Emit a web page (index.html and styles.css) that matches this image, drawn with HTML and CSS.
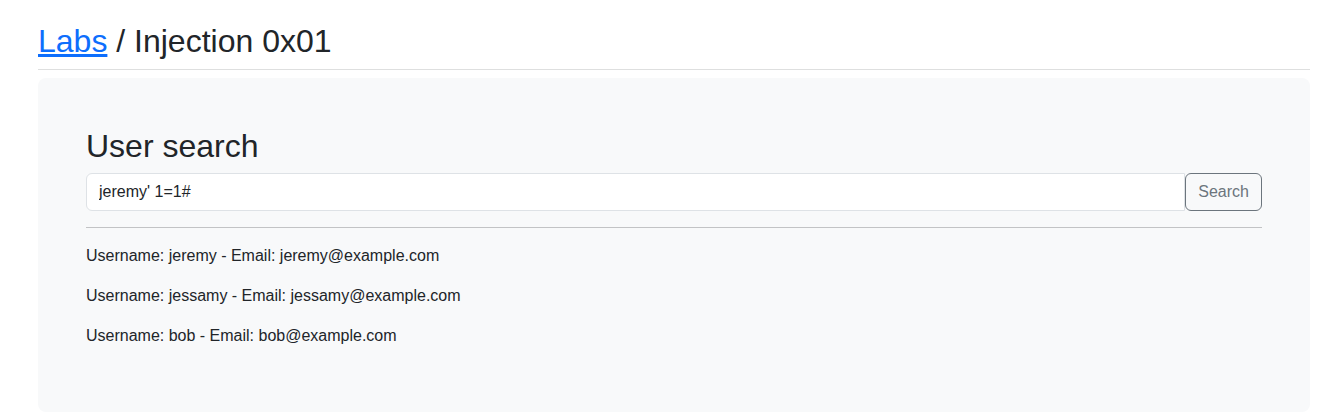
FILE: index.html
```html
<!DOCTYPE html>
<html lang="en">
<head>
<meta charset="utf-8">
<title>Injection 0x01</title>
<link rel="stylesheet" href="styles.css">
</head>
<body>
<div class="page">
  <h2 class="title"><a href="#">Labs</a> / Injection 0x01</h2>
  <hr class="rule-top">
  <div class="card">
    <h2 class="card-title">User search</h2>
    <form class="search">
      <input class="search-input" type="text" value="jeremy' 1=1#">
      <button class="search-btn" type="button">Search</button>
    </form>
    <hr class="rule">
    <p>Username: jeremy - Email: jeremy@example.com</p>
    <p>Username: jessamy - Email: jessamy@example.com</p>
    <p>Username: bob - Email: bob@example.com</p>
  </div>
</div>
</body>
</html>
```
FILE: styles.css
```css
* { box-sizing: border-box; }
html, body { margin: 0; padding: 0; background: #fff; }
body {
  font-family: "Liberation Sans", Arial, sans-serif;
  font-size: 16px;
  line-height: 1.5;
  color: #212529;
}
.page {
  padding: 22px 22px 0 38px;
}
.title {
  margin: 0;
  font-size: 32px;
  font-weight: 400;
  line-height: 1.2;
}
.title a { color: #0d6efd; text-decoration: underline; }
hr {
  border: 0;
  border-top: 1px solid #212529;
  opacity: .25;
  height: 0;
}
.rule-top { margin: 9px 0 8px; opacity: .15; }
.card {
  background: #f8f9fa;
  border-radius: 8px;
  padding: 49px 48px 48px;
}
.card-title {
  margin: 0 0 7px;
  font-size: 32px;
  font-weight: 400;
  line-height: 1.2;
}
.search { display: flex; margin: 0; }
.search-input {
  flex: 1;
  height: 38px;
  padding: 6px 12px;
  font: inherit;
  font-size: 16px;
  color: #212529;
  background: #fff;
  border: 1px solid #dee2e6;
  border-radius: 6px 0 0 6px;
  outline: none;
}
.search-btn {
  height: 38px;
  padding: 6px 12px;
  font: inherit;
  font-size: 16px;
  color: #6c757d;
  background: transparent;
  border: 1px solid #6c757d;
  border-radius: 6px;
}
.rule { margin: 16px 0; }
.card p { margin: 0 0 16px; }
```
